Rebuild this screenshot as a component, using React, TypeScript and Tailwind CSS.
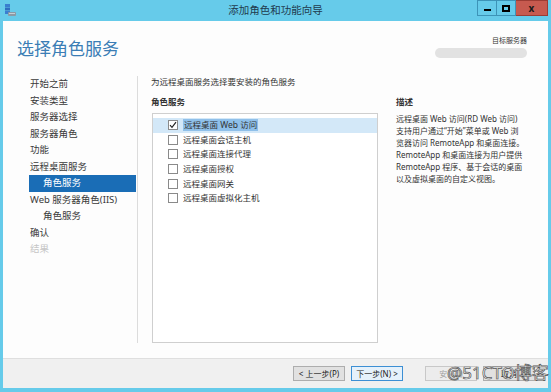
import React from 'react';

const font = '[font-family:"Noto_Sans","Noto_Sans_CJK_SC",sans-serif]';

const navItems = [
  { label: '开始之前', indent: false },
  { label: '安装类型', indent: false },
  { label: '服务器选择', indent: false },
  { label: '服务器角色', indent: false },
  { label: '功能', indent: false },
  { label: '远程桌面服务', indent: false },
  { label: '角色服务', indent: true, active: true },
  { label: 'Web 服务器角色(IIS)', indent: false },
  { label: '角色服务', indent: true },
  { label: '确认', indent: false },
  { label: '结果', indent: false, disabled: true },
];

const services = [
  { label: '远程桌面 Web 访问', checked: true },
  { label: '远程桌面会话主机' },
  { label: '远程桌面连接代理' },
  { label: '远程桌面授权' },
  { label: '远程桌面网关' },
  { label: '远程桌面虚拟化主机' },
];

const descLines = [
  '远程桌面 Web 访问(RD Web 访问)',
  '支持用户通过“开始”菜单或 Web 浏',
  '览器访问 RemoteApp 和桌面连接。',
  'RemoteApp 和桌面连接为用户提供',
  'RemoteApp 程序、基于会话的桌面',
  '以及虚拟桌面的自定义视图。',
];

const AppIcon = () => (
  <svg width="13" height="13" viewBox="0 0 13 13">
    <rect x="1" y="0" width="5" height="3" fill="#3a7fd0" />
    <rect x="1" y="3.5" width="5" height="3" fill="#2f6fc0" />
    <rect x="1" y="7" width="5" height="3" fill="#3a7fd0" />
    <rect x="4" y="8" width="8" height="4" rx="1" fill="#8a9aa6" />
    <rect x="5" y="9" width="6" height="1" fill="#c4ced6" />
  </svg>
);

const App = () => {
  return (
    <div className={`w-[551px] h-[392px] bg-[#66cbea] flex flex-col relative overflow-hidden ${font}`}>
      {/* title bar */}
      <div className="h-[21px] relative flex items-center justify-center">
        <div className="absolute left-[4px] top-[4px]">
          <AppIcon />
        </div>
        <span className="text-[10.5px] text-[#1f3a4d] leading-none">添加角色和功能向导</span>
        <div className="absolute right-[3px] top-0 flex h-[16px]">
          <div className="w-[20px] h-full border border-[#3d94b8] flex items-end justify-center pb-[4px]">
            <div className="w-[7px] h-[2px] bg-black" />
          </div>
          <div className="w-[19px] h-full border border-l-0 border-[#3d94b8] flex items-center justify-center">
            <div className="w-[8px] h-[7px] border-2 border-black" />
          </div>
          <div className="w-[32px] h-full bg-[#c75a4f] border border-l-0 border-[#9c3c34] flex items-center justify-center text-[10px] font-bold text-[#1a1a1a] leading-none">
            x
          </div>
        </div>
      </div>

      {/* body */}
      <div className="flex-1 mx-[3px] mb-[4px] bg-[#fdfdfd] flex flex-col">
        <div className="h-[55px] flex justify-between">
          <div className="pl-[14px] pt-[17px] text-[17px] leading-[22px] text-[#3b7db5]">选择角色服务</div>
          <div className="pr-[21px] pt-[15px] flex flex-col items-end">
            <span className="text-[7px] leading-[9px] text-[#333]">目标服务器</span>
            <div className="mt-[3px] w-[92px] h-[10px] rounded-[5px] bg-[#e2e2e2]" />
          </div>
        </div>

        <div className="flex-1 flex">
          <div className="w-[134px] pl-[26px] pr-[1px]">
            {navItems.map((item, i) => (
              <div
                key={i}
                className={`h-[16.5px] leading-[16.5px] text-[9.5px] whitespace-nowrap ${
                  item.indent ? 'pl-[14px]' : 'pl-[1px]'
                } ${item.active ? 'bg-[#1a6db6] text-white' : item.disabled ? 'text-[#c6c6c6]' : 'text-[#3a3a3a]'}`}
              >
                {item.label}
              </div>
            ))}
          </div>

          <div className="flex-1 flex border-l border-[#dcdcdc] mb-[15px] pl-[13px]">
            <div className="w-[227px] flex flex-col">
              <div className="text-[8.5px] leading-[12px] text-[#333]">为远程桌面服务选择要安装的角色服务</div>
              <div className="mt-[8px] text-[8.5px] leading-[12px] font-bold text-[#333]">角色服务</div>
              <div className="mt-[5px] flex-1 border border-[#cfcfcf] bg-white pt-[4px] ml-[1px]">
                {services.map((s, i) => (
                  <div
                    key={i}
                    className={`h-[14.6px] flex items-center ${s.checked ? 'bg-[#d3e8f8]' : ''}`}
                  >
                    <div className="ml-[15px] w-[10px] h-[10px] border border-[#8a8a8a] bg-white flex items-center justify-center">
                      {s.checked && (
                        <svg width="8" height="8" viewBox="0 0 8 8">
                          <path d="M1 4.2 L3 6.3 L7 1.2" stroke="#222" strokeWidth="1.2" fill="none" />
                        </svg>
                      )}
                    </div>
                    <span
                      className={`ml-[5px] text-[8.5px] leading-[12px] text-[#333] ${
                        s.checked ? 'bg-[#8fc0ea] px-[1px]' : ''
                      }`}
                    >
                      {s.label}
                    </span>
                  </div>
                ))}
              </div>
            </div>

            <div className="ml-[18px] w-[145px]">
              <div className="mt-[20px] text-[8.5px] leading-[12px] font-bold text-[#333]">描述</div>
              <div className="mt-[5px] text-[8px] leading-[12px] text-[#333]">
                {descLines.map((l, i) => (
                  <div key={i} className="whitespace-nowrap">
                    {l}
                  </div>
                ))}
              </div>
            </div>
          </div>
        </div>

        {/* footer */}
        <div className="h-[30px] bg-[#f0f0f0] border-t border-[#dfdfdf] flex pl-[290px] pt-[7px]">
          <div className="w-[52px] h-[15px] border border-[#adadad] bg-[#e1e1e1] text-[8px] leading-[13px] text-[#222] text-center">
            &lt; 上一步(P)
          </div>
          <div className="ml-[6px] w-[52px] h-[15px] border border-[#3c8fd4] bg-[#e5f1fb] text-[8px] leading-[13px] text-[#222] text-center">
            下一步(N) &gt;
          </div>
          <div className="ml-[22px] w-[52px] h-[15px] border border-[#c8c8c8] bg-[#ececec] text-[8px] leading-[13px] text-[#a0a0a0] text-center">
            安装(I)
          </div>
          <div className="ml-[6px] w-[52px] h-[15px] border border-[#adadad] bg-[#e1e1e1] text-[8px] leading-[13px] text-[#222] text-center">
            取消
          </div>
        </div>
      </div>

      <div className="absolute left-[447px] top-[363px] text-[17px] leading-[20px] text-white [-webkit-text-stroke:0.7px_#555] whitespace-nowrap">
        @51CTO博客
      </div>
    </div>
  );
};

export default App;
